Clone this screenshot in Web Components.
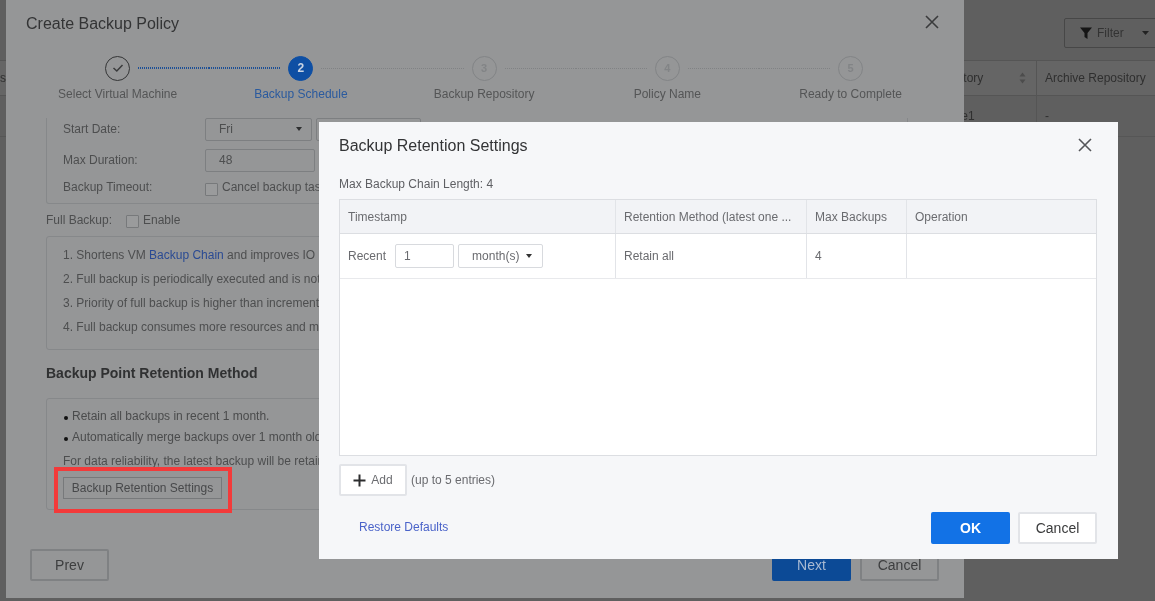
<!DOCTYPE html>
<html>
<head>
<meta charset="utf-8">
<title>Create Backup Policy</title>
<style>
    html, body {
        margin: 0;
        height: 100%;
        overflow: hidden;
        background: #5f5f5f;
        font-family: "Liberation Sans", Arial, sans-serif;
    }
</style>
</head>
<body>
<backup-page></backup-page>

<script>
const FONT = '"Liberation Sans", Arial, sans-serif';

class CloseIcon extends HTMLElement {
    connectedCallback() {
        this.attachShadow({ mode: 'open' }).innerHTML = `
            <style>
                :host { display: block; width: 14px; height: 14px; color: inherit; }
                svg { display: block; }
            </style>
            <svg width="14" height="14" viewBox="0 0 14 14" fill="none" stroke="currentColor" stroke-width="1.6">
                <path d="M1 1 L13 13 M13 1 L1 13"/>
            </svg>`;
    }
}
customElements.define('close-icon', CloseIcon);

class UiButton extends HTMLElement {
    connectedCallback() {
        this.attachShadow({ mode: 'open' }).innerHTML = `
            <style>
                :host {
                    display: inline-flex;
                    box-sizing: border-box;
                    align-items: center;
                    justify-content: center;
                    width: 79px;
                    height: 32px;
                    font-size: 14px;
                    border: 2px solid var(--btn-border, #e2e4e8);
                    border-radius: 2px;
                    background: var(--btn-bg, #fff);
                    color: var(--btn-color, #3a3b3c);
                    gap: 4px;
                }
            </style>
            <slot></slot>`;
    }
}
customElements.define('ui-button', UiButton);

class WizardSteps extends HTMLElement {
    connectedCallback() {
        const steps = [
            ['done', '', 'Select Virtual Machine'],
            ['active', '2', 'Backup Schedule'],
            ['todo', '3', 'Backup Repository'],
            ['todo', '4', 'Policy Name'],
            ['todo', '5', 'Ready to Complete']
        ];
        const cells = steps.map((s, i) => `
            <div class="step ${s[0]}">
                <div class="track">
                    <i class="line ${i === 0 ? 'none' : ''} ${i === 1 ? 'blue' : ''}"></i>
                    <span class="dot">${s[0] === 'done'
                        ? '<svg width="12" height="10" viewBox="0 0 12 10" fill="none" stroke="#3a3b3c" stroke-width="1.5"><path d="M1.5 5 L4.8 8 L10.5 2"/></svg>'
                        : s[1]}</span>
                    <i class="line ${i === 4 ? 'none' : ''} ${i === 0 ? 'blue' : ''}"></i>
                </div>
                <div class="label">${s[2]}</div>
            </div>`).join('');
        this.attachShadow({ mode: 'open' }).innerHTML = `
            <style>
                :host {
                    display: grid;
                    grid-template-columns: repeat(5, 183.25px);
                    padding-left: 20px;
                    height: 60px;
                    font-size: 12px;
                }
                .step { display: flex; flex-direction: column; align-items: center; }
                .track { display: flex; align-items: center; width: 100%; height: 26px; }
                .line { flex: 1; height: 1px; background: repeating-linear-gradient(90deg, #808284 0 1px, transparent 1px 2px); }
                .line.blue { height: 2px; background: repeating-linear-gradient(90deg, #1c4f96 0 1px, transparent 1px 2px); }
                .line.none { background: none; }
                .dot {
                    box-sizing: border-box;
                    width: 25px;
                    height: 25px;
                    margin: 0 8px;
                    border-radius: 50%;
                    border: 1.5px solid #828486;
                    display: flex;
                    align-items: center;
                    justify-content: center;
                    font-size: 11px;
                    font-weight: bold;
                    color: #828486;
                }
                .done .dot { border-color: #343536; }
                .active .dot { background: #0e4fa4; border-color: #0e4fa4; color: #c9d4e4; font-size: 12px; }
                .label { margin-top: 6px; line-height: 14px; color: #545556; white-space: nowrap; }
                .active .label { color: #2a5a9e; }
            </style>
            ${cells}`;
    }
}
customElements.define('wizard-steps', WizardSteps);

class UiPanel extends HTMLElement {
    connectedCallback() {
        this.attachShadow({ mode: 'open' }).innerHTML = `
            <style>
                :host {
                    display: block;
                    box-sizing: border-box;
                    width: 862px;
                    border: 1px solid #86888a;
                    border-radius: 3px;
                    padding: 0 16px;
                }
            </style>
            <slot></slot>`;
    }
}
customElements.define('ui-panel', UiPanel);

class FauxCheck extends HTMLElement {
    connectedCallback() {
        this.attachShadow({ mode: 'open' }).innerHTML = `
            <style>
                :host {
                    display: inline-block;
                    box-sizing: border-box;
                    width: 13px;
                    height: 13px;
                    border: 1px solid #77797b;
                    border-radius: 1px;
                    background: #9a9b9c;
                }
            </style>`;
    }
}
customElements.define('faux-check', FauxCheck);

class PolicyDialog extends HTMLElement {
    connectedCallback() {
        this.attachShadow({ mode: 'open' }).innerHTML = `
            <style>
                :host {
                    position: absolute;
                    left: 6px;
                    top: 0;
                    box-sizing: border-box;
                    width: 958px;
                    height: 598px;
                    background: #959697;
                    display: flex;
                    flex-direction: column;
                    font-size: 12px;
                    color: #4d4e4f;
                }
                header {
                    height: 55px;
                    padding: 15px 25px 0 20px;
                    box-sizing: border-box;
                    display: flex;
                    justify-content: space-between;
                    font-size: 16px;
                    line-height: 18px;
                    color: #333435;
                }
                header close-icon { color: #3a3b3c; }
                .scroll { flex: 1; overflow: hidden; padding-left: 40px; }
                .row { display: flex; align-items: center; white-space: nowrap; }
                .lab { width: 142px; padding-bottom: 2px; }
                .first { height: 23px; margin-top: 3px; }
                .second { height: 23px; margin-top: 8px; }
                .third { height: 15px; margin-top: 8px; margin-bottom: 8px; }
                .box {
                    box-sizing: border-box;
                    height: 23px;
                    border: 1px solid #7d7f81;
                    border-radius: 2px;
                    display: flex;
                    align-items: center;
                    justify-content: space-between;
                    padding: 0 9px 2px 13px;
                    color: #4d4e4f;
                }
                .caret { width: 0; height: 0; border: 3.5px solid transparent; border-top: 4px solid #2e2f30; border-bottom: 0; }
                .full { height: 14px; margin: 10px 0 8px; }
                .full span { padding-bottom: 2px; }
                .full .lab2 { width: 80px; }
                .full span:last-child, .third span:last-child { margin-left: 4px; padding-bottom: 2px; }
                .lines { padding: 6px 0 10px; line-height: 24px; white-space: nowrap; }
                .lines a { color: #2a4a93; }
                h3 { margin: 13px 0 15px; font-size: 14px; line-height: 20px; font-weight: bold; color: #303132; }
                .rules { padding: 7px 0 10px; white-space: nowrap; position: relative; }
                .rules div { line-height: 21px; color: #4a4b4c; }
                .rules div::before { content: ""; display: inline-block; width: 4px; height: 4px; border-radius: 50%; background: #111; margin: 0 4px 0 1px; vertical-align: 0; }
                .rules p { margin: 3px 0 0; line-height: 20px; }
                .settings {
                    box-sizing: border-box;
                    width: 159px;
                    height: 22px;
                    margin-top: 6px;
                    border: 1px solid #77797b;
                    display: flex;
                    align-items: center;
                    justify-content: center;
                    color: #47484a;
                }
                .mark {
                    position: absolute;
                    left: -9px;
                    bottom: -4px;
                    width: 178px;
                    height: 46px;
                    box-sizing: border-box;
                    border: 4px solid #f33a3a;
                }
                footer {
                    display: flex;
                    justify-content: space-between;
                    padding: 0 25px 17px 24px;
                    --btn-bg: transparent;
                    --btn-border: #7f8183;
                    --btn-color: #3d3e3f;
                }
                footer div { display: flex; gap: 9px; }
                .next { --btn-bg: #0c4a96; --btn-border: #0c4a96; --btn-color: #a9bad2; }
            </style>
            <header><span>Create Backup Policy</span><close-icon></close-icon></header>
            <wizard-steps></wizard-steps>
            <div class="scroll">
                <ui-panel style="border-top:0;border-radius:0 0 3px 3px">
                    <div class="row first"><span class="lab">Start Date:</span>
                        <span class="box" style="width:107px">Fri<i class="caret"></i></span>
                        <span class="box" style="width:105px;margin-left:4px"></span></div>
                    <div class="row second"><span class="lab">Max Duration:</span>
                        <span class="box" style="width:110px">48</span></div>
                    <div class="row third"><span class="lab">Backup Timeout:</span>
                        <faux-check style="margin-top:3px"></faux-check><span>Cancel backup tasks</span></div>
                </ui-panel>
                <div class="row full"><span class="lab2">Full Backup:</span><faux-check></faux-check><span>Enable</span></div>
                <ui-panel>
                    <div class="lines">
                        1. Shortens VM <a>Backup Chain</a> and improves IO<br>
                        2. Full backup is periodically executed and is not<br>
                        3. Priority of full backup is higher than incremental<br>
                        4. Full backup consumes more resources and may
                    </div>
                </ui-panel>
                <h3>Backup Point Retention Method</h3>
                <ui-panel>
                    <div class="rules">
                        <div>Retain all backups in recent 1 month.</div>
                        <div>Automatically merge backups over 1 month old</div>
                        <p>For data reliability, the latest backup will be retained</p>
                        <span class="settings">Backup Retention Settings</span>
                        <i class="mark"></i>
                    </div>
                </ui-panel>
            </div>
            <footer>
                <ui-button>Prev</ui-button>
                <div><ui-button class="next">Next</ui-button><ui-button>Cancel</ui-button></div>
            </footer>`;
    }
}
customElements.define('policy-dialog', PolicyDialog);

class RetentionDialog extends HTMLElement {
    connectedCallback() {
        this.attachShadow({ mode: 'open' }).innerHTML = `
            <style>
                :host {
                    position: absolute;
                    left: 319px;
                    top: 122px;
                    box-sizing: border-box;
                    width: 799px;
                    height: 437px;
                    padding: 0 21px 0 20px;
                    background: #f6f7f9;
                    color: #6a6b6f;
                    font-size: 12px;
                    display: flex;
                    flex-direction: column;
                }
                header {
                    height: 46px;
                    padding-top: 15px;
                    box-sizing: border-box;
                    display: flex;
                    justify-content: space-between;
                    font-size: 16px;
                    line-height: 18px;
                    color: #333436;
                }
                header close-icon { margin: 1px 5px 0 0; color: #55565a; }
                .chain { margin-top: 9px; height: 14px; line-height: 14px; color: #5e5f63; }
                .table {
                    margin-top: 8px;
                    box-sizing: border-box;
                    height: 257px;
                    border: 1px solid #dcdee2;
                    background: #fff;
                }
                .tr { display: grid; grid-template-columns: 276px 191px 100px 1fr; }
                .th { height: 33px; background: #f2f3f6; border-bottom: 1px solid #dcdee2; }
                .td { height: 44px; border-bottom: 1px solid #e8e9ec; }
                .tr > div { display: flex; align-items: center; padding-left: 8px; white-space: nowrap; border-right: 1px solid #e2e4e8; }
                .tr > div:last-child { border-right: 0; }
                .num, .unit {
                    box-sizing: border-box;
                    height: 24px;
                    border: 1px solid #d8dade;
                    border-radius: 2px;
                    background: #fff;
                    display: flex;
                    align-items: center;
                }
                .num { width: 59px; margin-left: 9px; padding-left: 8px; }
                .unit { width: 85px; margin-left: 4px; padding-left: 13px; gap: 7px; }
                .caret { width: 0; height: 0; border: 3.5px solid transparent; border-top: 4px solid #333; border-bottom: 0; }
                .add { display: flex; align-items: center; margin-top: 8px; gap: 4px; font-size: 12px; }
                .add ui-button { width: 68px; font-size: 12px; --btn-color: #6b6c70; gap: 5px; }
                footer { display: flex; align-items: center; justify-content: space-between; margin-top: 16px; }
                footer a { margin-left: 20px; padding-bottom: 2px; color: #4a63c9; }
                footer div { display: flex; gap: 8px; }
                .ok { --btn-bg: #1272e6; --btn-border: #1272e6; --btn-color: #fff; font-weight: bold; }
            </style>
            <header><span>Backup Retention Settings</span><close-icon></close-icon></header>
            <div class="chain">Max Backup Chain Length: 4</div>
            <div class="table">
                <div class="tr th">
                    <div>Timestamp</div>
                    <div>Retention Method (latest one ...</div>
                    <div>Max Backups</div>
                    <div>Operation</div>
                </div>
                <div class="tr td">
                    <div>Recent<span class="num">1</span><span class="unit">month(s)<i class="caret"></i></span></div>
                    <div>Retain all</div>
                    <div>4</div>
                    <div></div>
                </div>
            </div>
            <div class="add">
                <ui-button>
                    <svg width="13" height="13" viewBox="0 0 13 13" fill="none" stroke="#2c2d2e" stroke-width="2"><path d="M6.5 0.5 V12.5 M0.5 6.5 H12.5"/></svg>
                    Add
                </ui-button>
                <span>(up to 5 entries)</span>
            </div>
            <footer>
                <a>Restore Defaults</a>
                <div><ui-button class="ok">OK</ui-button><ui-button>Cancel</ui-button></div>
            </footer>`;
    }
}
customElements.define('retention-dialog', RetentionDialog);

class BackupPage extends HTMLElement {
    connectedCallback() {
        this.attachShadow({ mode: 'open' }).innerHTML = `
            <style>
                :host {
                    display: block;
                    position: relative;
                    width: 1155px;
                    height: 601px;
                    overflow: hidden;
                    font-family: ${FONT};
                    font-size: 12px;
                    color: #2f2f2f;
                    background: #5f5f5f;
                    filter: blur(0.5px);
                }
                .tools { display: flex; justify-content: flex-end; height: 60px; box-sizing: border-box; padding-top: 18px; }
                .filter {
                    box-sizing: border-box;
                    width: 100px;
                    height: 30px;
                    margin-right: -9px;
                    flex: none;
                    border: 1px solid #474747;
                    border-radius: 2px;
                    display: flex;
                    align-items: center;
                    padding-left: 15px;
                    gap: 5px;
                    color: #333;
                }
                .filter .down { margin-left: 13px; }
                .tr { display: grid; grid-template-columns: 890px 146px 119px; }
                .th { height: 36px; background: #656565; border-top: 1px solid #555; border-bottom: 1px solid #555; box-sizing: border-box; }
                .td { height: 41px; border-bottom: 1px solid #565656; box-sizing: border-box; }
                .tr > div { display: flex; align-items: center; white-space: nowrap; }
                .tr > div + div + div { border-left: 1px solid #555; padding-left: 8px; }
                .repo { justify-content: space-between; padding-right: 10px; padding-left: 36px; }
            </style>
            <div class="tools">
                <div class="filter">
                    <svg width="12" height="12" viewBox="0 0 12 12"><path d="M0 0.5 H12 L7.5 6 V12 L4.5 10 V6 Z" fill="#151515"/></svg>
                    Filter
                    <svg class="down" width="7" height="4" viewBox="0 0 7 4"><path d="M0 0 H7 L3.5 4 Z" fill="#222"/></svg>
                </div>
            </div>
            <div class="tr th">
                <div>s</div>
                <div class="repo">Repository
                    <svg width="7" height="12" viewBox="0 0 7 12"><path d="M3.5 0.5 L6.5 4.5 H0.5 Z M3.5 11.5 L6.5 7.5 H0.5 Z" fill="#4c4c4c"/></svg>
                </div>
                <div>Archive Repository</div>
            </div>
            <div class="tr td"><div></div><div class="repo">Storage1</div><div>-</div></div>
            <policy-dialog></policy-dialog>
            <retention-dialog></retention-dialog>`;
    }
}
customElements.define('backup-page', BackupPage);
</script>
</body>
</html>
